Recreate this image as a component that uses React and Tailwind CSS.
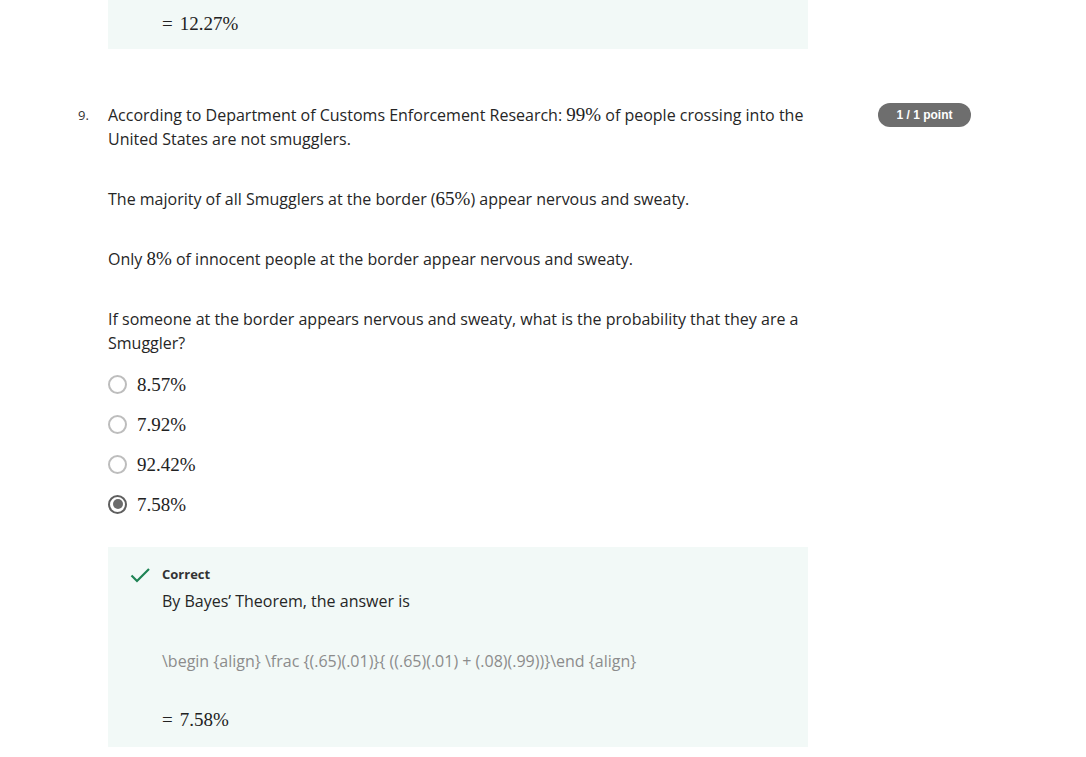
import React from "react";

// Quiz review — question 9 with its feedback panel.
const OPTIONS = [
  { value: "8.57%", checked: false },
  { value: "7.92%", checked: false },
  { value: "92.42%", checked: false },
  { value: "7.58%", checked: true },
];

function M({ children }) {
  return (
    <span className="font-['Liberation_Serif',serif] text-[19px] leading-none text-[#222]">
      {children}
    </span>
  );
}

function Eq({ children }) {
  return (
    <div className="font-['Liberation_Serif',serif] text-[19px] leading-[24px] text-[#222]">
      <span className="mr-[7px]">=</span>
      {children}
    </div>
  );
}

function Radio({ checked }) {
  if (checked) {
    return (
      <span className="w-[19px] h-[19px] rounded-full border-2 border-[#5f5f5f] flex items-center justify-center">
        <span className="w-[10px] h-[10px] rounded-full bg-[#6b6b6b]" />
      </span>
    );
  }
  return <span className="w-[19px] h-[19px] rounded-full border-2 border-[#bdbdbd] bg-white" />;
}

export default function App() {
  return (
    <div className="w-[1086px] h-[757px] overflow-hidden bg-white text-[#262626] font-['Open_Sans',sans-serif]">
      <div className="pl-[108px]">
        <div className="w-[700px] h-[49px] bg-[#f2f9f7] pl-[54px] pt-[12px]">
          <Eq>12.27%</Eq>
        </div>
      </div>

      <div className="flex pl-[78px] pt-[54px]">
        <div className="w-[30px] text-[13px] leading-[24px] text-[#333]">9.</div>

        <div className="w-[700px]">
          <div className="text-[16px] leading-[24px] space-y-[36px]">
            <p>
              According to Department of Customs Enforcement Research: <M>99%</M> of people crossing into the
              United States are not smugglers.
            </p>
            <p>
              The majority of all Smugglers at the border (<M>65%</M>) appear nervous and sweaty.
            </p>
            <p>
              Only <M>8%</M> of innocent people at the border appear nervous and sweaty.
            </p>
            <p>
              If someone at the border appears nervous and sweaty, what is the probability that they are a
              Smuggler?
            </p>
          </div>

          <div className="mt-[9px]">
            {OPTIONS.map((o) => (
              <div key={o.value} className="h-[40px] flex items-center gap-[10px]">
                <Radio checked={o.checked} />
                <M>{o.value}</M>
              </div>
            ))}
          </div>

          <div className="mt-[23px] h-[200px] bg-[#f2f9f7] flex pl-[22px] pt-[17px]">
            <svg width="20" height="16" viewBox="0 0 20 16" className="mt-[3px]">
              <polyline points="1.5,8.5 7,14 19,2" fill="none" stroke="#1f8354" strokeWidth="2.2" />
            </svg>
            <div className="ml-[12px]">
              <div className="text-[13px] leading-[20px] font-bold text-[#333]">Correct</div>
              <div className="mt-[5px] text-[16px] leading-[24px]">By Bayes’ Theorem, the answer is</div>
              <div className="mt-[36px] text-[16px] leading-[24px] text-[#8c8c8c]">
                \begin {"{align}"} \frac {"{(.65)(.01)}{ ((.65)(.01) + (.08)(.99))}"}\end {"{align}"}
              </div>
              <div className="mt-[35px]">
                <Eq>7.58%</Eq>
              </div>
            </div>
          </div>
        </div>

        <div className="ml-[70px]">
          <div className="w-[93px] h-[24px] rounded-full bg-[#6e6e6e] text-white flex items-center justify-center text-[12px] font-bold font-['Liberation_Sans',sans-serif]">
            1 / 1 point
          </div>
        </div>
      </div>
    </div>
  );
}
